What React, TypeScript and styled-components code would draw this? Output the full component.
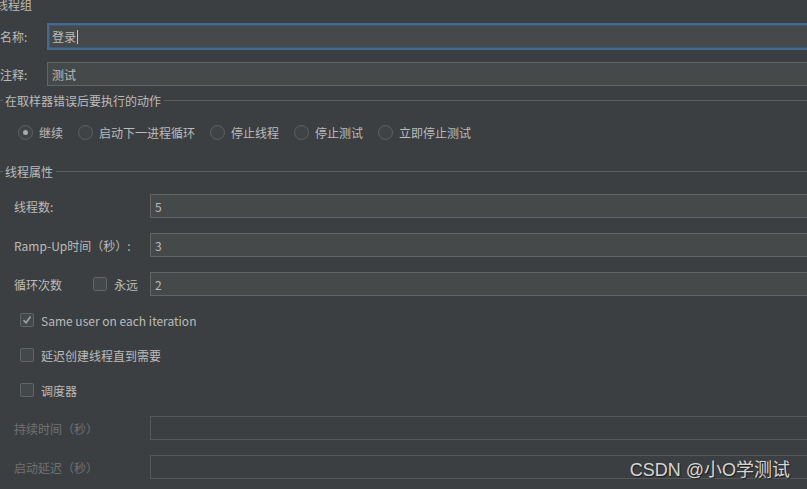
import styled, { createGlobalStyle } from 'styled-components'

const GlobalStyle = createGlobalStyle`
  html, body {
    margin: 0;
    padding: 0;
    background: #3c3f41;
  }
`

const Page = styled.div`
  position: relative;
  display: flex;
  flex-direction: column;

  width: 807px;
  height: 489px;
  overflow: hidden;

  font: 12px 'Noto Sans CJK SC', 'Noto Sans', sans-serif;
  color: #bbbbbb;

  background: #3c3f41;
`

const Title = styled.div`
  margin: 0 0 0 -4px;
  height: 11px;
  line-height: 10px;
`

const TopRow = styled.div<{ top: number }>`
  display: flex;
  align-items: center;

  margin-top: ${(p) => p.top}px;
`

const TopLabel = styled.span`
  width: 47px;
  white-space: nowrap;
`

const Field = styled.div<{ focused?: boolean; height?: number; disabled?: boolean }>`
  flex: 1;
  display: flex;
  align-items: center;

  box-sizing: border-box;
  margin-right: -30px;
  padding-left: ${(p) => (p.focused ? 3 : 4)}px;
  height: ${(p) => p.height || 24}px;

  border: ${(p) =>
    p.focused ? '2px solid #46698f' : p.disabled ? '1px solid #555759' : '1px solid #646464'};
  box-shadow: ${(p) => (p.focused ? 'inset 0 0 0 1px #3b5877' : 'none')};

  color: #bbbbbb;
  background: ${(p) => (p.disabled ? '#3c3f41' : '#45494a')};
`

const Caret = styled.span`
  display: inline-block;
  margin-left: 1px;
  width: 1px;
  height: 14px;
  background: #c8c8c8;
`

const GroupHeader = styled.div<{ top: number }>`
  display: flex;
  align-items: center;

  margin-top: ${(p) => p.top}px;
  height: 16px;

  &::before {
    content: '';
    width: 3px;
    height: 1px;
    margin-right: 2px;
    background: #5b5e60;
  }

  &::after {
    content: '';
    flex: 1;
    height: 1px;
    margin-left: 3px;
    background: #5b5e60;
  }
`

const RadioRow = styled.div`
  display: flex;
  align-items: center;
  gap: 15px;

  margin-top: 16px;
  padding-left: 18px;
  height: 16px;
`

const RadioItem = styled.label`
  display: flex;
  align-items: center;
  gap: 6px;
  white-space: nowrap;
`

const RadioCircle = styled.span<{ checked?: boolean }>`
  display: flex;
  align-items: center;
  justify-content: center;

  box-sizing: border-box;
  width: 15px;
  height: 15px;

  border: 1px solid #5f6263;
  border-radius: 50%;

  background: #3f4345;

  &::after {
    content: '';
    display: ${(p) => (p.checked ? 'block' : 'none')};
    width: 5px;
    height: 5px;
    border-radius: 50%;
    background: #a9a9a9;
  }
`

const FieldRow = styled.div<{ top: number }>`
  display: flex;
  align-items: center;

  margin-top: ${(p) => p.top}px;
  padding-left: 14px;
  height: 24px;
`

const FieldLabel = styled.div<{ disabled?: boolean }>`
  display: flex;
  align-items: center;

  width: 136px;
  white-space: nowrap;

  color: ${(p) => (p.disabled ? '#6f7173' : '#bbbbbb')};
`

const LoopLabel = styled.span`
  width: 79px;
`

const CheckRow = styled.div<{ top: number }>`
  display: flex;
  align-items: center;
  gap: 7px;

  margin-top: ${(p) => p.top}px;
  padding-left: 20px;
  height: 20px;
`

const Box = styled.span`
  display: flex;
  align-items: center;
  justify-content: center;

  box-sizing: border-box;
  width: 14px;
  height: 14px;

  border: 1px solid #626566;
  border-radius: 2px;

  background: #43494a;
`

const InlineCheck = styled.span`
  display: flex;
  align-items: center;
  gap: 7px;
`

const Watermark = styled.div`
  position: absolute;
  right: 17px;
  bottom: 8px;

  font: 18px 'Liberation Sans', 'Noto Sans CJK SC', sans-serif;
  color: #d6d6d6;
  text-shadow: 1px 1px 1px #1c1c1c;
`

const Checkbox = ({ checked }: { checked?: boolean }) => (
  <Box>
    {checked && (
      <svg width="10" height="10" viewBox="0 0 10 10">
        <path d="M1.5 5.2 L4 7.8 L8.6 1.6" fill="none" stroke="#a4a4a4" strokeWidth="1.6" />
      </svg>
    )}
  </Box>
)

const radios = ['继续', '启动下一进程循环', '停止线程', '停止测试', '立即停止测试']

export const App = () => {
  return (
    <Page>
      <GlobalStyle />
      <Title>线程组</Title>
      <TopRow top={12}>
        <TopLabel>名称:</TopLabel>
        <Field focused height={27}>
          登录
          <Caret />
        </Field>
      </TopRow>
      <TopRow top={12}>
        <TopLabel>注释:</TopLabel>
        <Field>测试</Field>
      </TopRow>

      <GroupHeader top={6}>在取样器错误后要执行的动作</GroupHeader>
      <RadioRow>
        {radios.map((text, index) => (
          <RadioItem key={text}>
            <RadioCircle checked={index === 0} />
            {text}
          </RadioItem>
        ))}
      </RadioRow>

      <GroupHeader top={23}>线程属性</GroupHeader>
      <FieldRow top={15}>
        <FieldLabel>线程数:</FieldLabel>
        <Field>5</Field>
      </FieldRow>
      <FieldRow top={15}>
        <FieldLabel>Ramp-Up时间（秒）:</FieldLabel>
        <Field>3</Field>
      </FieldRow>
      <FieldRow top={15}>
        <FieldLabel>
          <LoopLabel>循环次数</LoopLabel>
          <InlineCheck>
            <Checkbox />
            永远
          </InlineCheck>
        </FieldLabel>
        <Field>2</Field>
      </FieldRow>

      <CheckRow top={14}>
        <Checkbox checked />
        Same user on each iteration
      </CheckRow>
      <CheckRow top={15}>
        <Checkbox />
        延迟创建线程直到需要
      </CheckRow>
      <CheckRow top={15}>
        <Checkbox />
        调度器
      </CheckRow>

      <FieldRow top={16}>
        <FieldLabel disabled>持续时间（秒）</FieldLabel>
        <Field disabled />
      </FieldRow>
      <FieldRow top={15}>
        <FieldLabel disabled>启动延迟（秒）</FieldLabel>
        <Field disabled />
      </FieldRow>

      <Watermark>CSDN @小O学测试</Watermark>
    </Page>
  )
}

export default App
